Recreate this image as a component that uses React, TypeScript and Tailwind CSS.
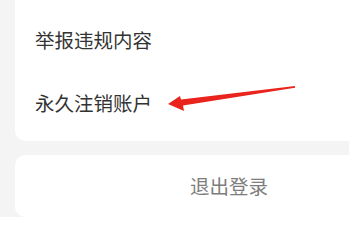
export default function App() {
  return (
    <div
      className="relative w-[349px] h-[228px] overflow-hidden bg-white"
      style={{ fontFamily: '"Noto Sans CJK SC", "Noto Sans", sans-serif' }}
    >
      <div className="flex h-[217px] flex-col gap-[14px] bg-[#f4f4f4] pl-[15px]">
        {/* settings card */}
        <div className="-mt-[12px] flex h-[154px] flex-col rounded-l-[10px] bg-white pl-[20px]">
          <div className="mt-[39px] text-[19.5px] leading-[26px] text-[#333]">举报违规内容</div>
          <div className="mt-[37px] text-[19.5px] leading-[26px] text-[#333]">永久注销账户</div>
        </div>
        {/* logout card */}
        <div className="flex h-[63px] items-center rounded-l-[10px] bg-white pl-[175px]">
          <span className="text-[19.5px] leading-[26px] text-[#7d7d7d]">退出登录</span>
        </div>
      </div>

      {/* red arrow annotation */}
      <svg className="absolute left-0 top-0" width="349" height="228" viewBox="0 0 349 228">
        <polygon
          points="168,104 180,96 181,99.5 295,86 295,87.8 183,105.5 184,111"
          fill="#e8241c"
        />
      </svg>
    </div>
  );
}
